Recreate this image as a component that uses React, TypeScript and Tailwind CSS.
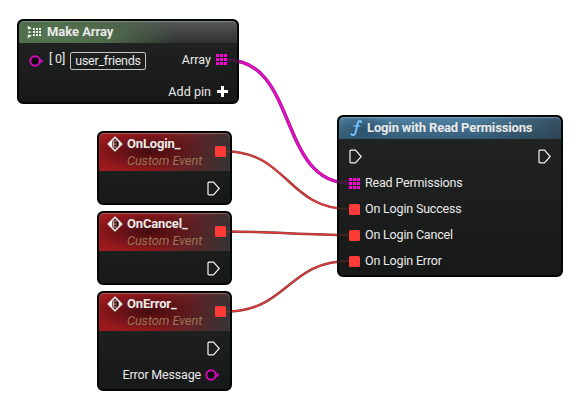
import React from "react";

const wires = [
  { d: "M227 60C298 60 278 183 349 183", color: "#e60bc4", edge: "#7d2470", width: 2.6 },
  { d: "M226 151.500C287 151.500 288 209 349 209", color: "#e03a3a", edge: "#7c3535", width: 1.5 },
  { d: "M226 231.500C268 231.500 307 235 349 235", color: "#e03a3a", edge: "#7c3535", width: 1.5 },
  { d: "M226 311.500C287 311.500 288 261 349 261", color: "#e03a3a", edge: "#7c3535", width: 1.5 },
];

function Wires({ className }: { className: string }) {
  return (
    <svg className={`pointer-events-none absolute inset-0 ${className}`} width="584" height="417" fill="none">
      {wires.map((w) => (
        <g key={w.d}>
          <path d={w.d} stroke={w.edge} strokeWidth={w.width + 0.9} />
          <path d={w.d} stroke={w.color} strokeWidth={w.width} />
        </g>
      ))}
    </svg>
  );
}

function Node({ className, children }: { className: string; children: React.ReactNode }) {
  return (
    <section
      className={`absolute overflow-hidden rounded-[6px] border-2 border-[#050606] bg-linear-to-b from-[#222524] to-[#171919] ${className}`}
    >
      {children}
    </section>
  );
}

function ExecPin() {
  return (
    <svg className="shrink-0" width="13" height="15" viewBox="0 0 13 15" fill="none">
      <path d="M2 1.200H6.500L12.200 7.500L6.500 13.800H2Q1 13.800 1 12.800V2.200Q1 1.200 2 1.200Z" stroke="#f4f4f4" strokeWidth="1.200" />
    </svg>
  );
}

function ArrayPin() {
  return (
    <svg className="shrink-0" width="11" height="11" fill="#fb06d6">
      {[0, 4, 8].map((y) => [0, 4, 8].map((x) => <rect key={`${x}-${y}`} x={x} y={y} width="3" height="3" />))}
    </svg>
  );
}

function StringPin() {
  return (
    <svg className="shrink-0" width="15" height="12" viewBox="0 0 15 12">
      <circle cx="6" cy="6" r="4.700" fill="#0b0b0b" stroke="#d908bb" strokeWidth="1.900" />
      <path d="M11.300 3.200L14.300 6L11.300 8.800Z" fill="#d908bb" />
    </svg>
  );
}

function DelegatePin() {
  return <span className="size-[11px] shrink-0 rounded-[1.500px] bg-[#ff3b38]" />;
}

function EventIcon() {
  return (
    <svg className="shrink-0" width="16" height="16" viewBox="0 0 16 16">
      <path d="M8 1.200L14.800 8L8 14.800L1.200 8Z" fill="#4a1519" stroke="#f1eeee" strokeWidth="1.600" strokeLinejoin="round" />
      <path d="M5.300 3.700V12.300L1 8Z" fill="#f1eeee" />
      <path d="M9.800 5H6.500V11H9.800M6.500 8H9.300" fill="none" stroke="#c9a9aa" strokeWidth="1.100" />
      <path d="M11.800 5L14.800 8L11.800 11Z" fill="#f1eeee" />
    </svg>
  );
}

function EventNode({ title, className, children }: { title: string; className: string; children?: React.ReactNode }) {
  return (
    <Node className={`left-[97px] w-[135px] ${className}`}>
      <header className="flex h-[38px] rounded-t-[5px] bg-[radial-gradient(ellipse_60px_20px_at_50px_18px,#450d10_0%,#490d1188_50%,transparent_100%),linear-gradient(100deg,#a0191d_0%,#8c1a1e_45%,#582629_75%,#343536_100%)] pl-[8px] shadow-[inset_0_1px_1px_#c28181aa]">
        <span className="pt-[3px]"><EventIcon /></span>
        <div className="ml-[4px] pt-[2px]">
          <h2 className="text-[13px] leading-[17px] font-bold tracking-[-0.150px] whitespace-nowrap text-[#ece9e9]">{title}</h2>
          <p className="text-[12.500px] leading-[17px] tracking-[0.020px] whitespace-nowrap text-[#9a7657] italic">Custom Event</p>
        </div>
        <span className="mt-[13px] mr-[4px] ml-auto flex items-start"><DelegatePin /></span>
      </header>
      <div className="flex h-[34px] items-center justify-end pr-[10px]">
        <ExecPin />
      </div>
      {children}
    </Node>
  );
}

function InputRow({ label, pin }: { label: string; pin: React.ReactNode }) {
  return (
    <div className="flex h-[26px] items-center gap-[5px] pl-[10px]">
      {pin}
      <span className="whitespace-nowrap">{label}</span>
    </div>
  );
}

export default function App() {
  return (
    <main className="relative h-[417px] w-[584px] overflow-hidden bg-white font-['Roboto',sans-serif] text-[12.500px] leading-[16px] tracking-[-0.180px] text-[#e9e9e9]">
      <Wires className="" />

      <Node className="top-[19px] left-[17px] h-[85px] w-[222px]">
        <header className="flex h-[22px] items-center rounded-t-[5px] bg-[radial-gradient(ellipse_125px_32px_at_35px_14px,#577553_0%,#4e6a4b_45%,transparent_100%),linear-gradient(#565958,#2e3130)] pl-[8px] shadow-[inset_0_1px_1px_#9aa899aa]">
          <svg width="15" height="14" viewBox="0 0 15 14" fill="#eef2ed">
            <path d="M0.500 0.500L5 3.500L1 4.500ZM0.500 13.500L5 10.500L1 9.500ZM1.500 6.200H3.500V8H1.500Z" />
            {[3, 6, 9].map((y) => [6, 9, 12].map((x) => <rect key={`${x}-${y}`} x={x} y={y} width="2" height="2" />))}
          </svg>
          <h2 className="ml-[5px] text-[13px] font-bold tracking-[-0.050px]">Make Array</h2>
        </header>
        <div className="flex h-[36px] items-center pr-[10px] pl-[10px]">
          <StringPin />
          <span className="ml-[5px] flex w-[17px] -translate-y-[2px] whitespace-nowrap">[ 0]</span>
          <span className="ml-[4px] flex h-[18px] w-[76px] items-center justify-center rounded-[2px] border border-[#c4c4c4] tracking-[-0.250px]">user_friends</span>
          <span className="mr-[5px] mb-[3px] ml-auto tracking-[0.050px]">Array</span>
          <span className="mb-[4px] flex"><ArrayPin /></span>
        </div>
        <div className="flex h-[23px] items-center justify-end gap-[6px] pt-[2px] pr-[9px]">
          <span className="tracking-[0.050px]">Add pin</span>
          <svg width="11" height="11"><path d="M5.500 0V11M0 5.500H11" stroke="#fff" strokeWidth="3" /></svg>
        </div>
      </Node>

      <EventNode title="OnLogin_" className="top-[131px] h-[74px]" />
      <EventNode title="OnCancel_" className="top-[211px] h-[74px]" />
      <EventNode title="OnError_" className="top-[291px] h-[100px]">
        <div className="flex h-[20px] items-center justify-end gap-[4px] pr-[10px]">
          <span>Error Message</span>
          <StringPin />
        </div>
      </EventNode>

      <Node className="top-[115px] left-[337px] h-[162px] w-[226px]">
        <header className="flex h-[22px] items-center rounded-t-[5px] bg-[radial-gradient(ellipse_30px_16px_at_24px_13px,#2a5069_0%,transparent_100%),linear-gradient(90deg,transparent_60%,#27323b99_100%),linear-gradient(#5283a4,#335c77)] pl-[10px] shadow-[inset_0_1px_1px_#83b1d0aa]">
          <svg width="15" height="18" viewBox="0 0 15 18" fill="none" stroke="#72c4fa" strokeLinecap="round">
            <path d="M12.200 3.200C11.500 1 9.300 1.500 8.500 5L6.700 13C6 16 4 17 2.300 15.300" strokeWidth="2" />
            <path d="M4.800 6.800H10.800" strokeWidth="1.300" />
          </svg>
          <h2 className="ml-[3px] text-[13px] font-bold tracking-[-0.150px] whitespace-nowrap">Login with Read Permissions</h2>
        </header>
        <div className="flex h-[31px] items-center justify-between pt-[3px] pr-[10px] pl-[10px]">
          <ExecPin />
          <ExecPin />
        </div>
        <InputRow label="Read Permissions" pin={<ArrayPin />} />
        <InputRow label="On Login Success" pin={<DelegatePin />} />
        <InputRow label="On Login Cancel" pin={<DelegatePin />} />
        <InputRow label="On Login Error" pin={<DelegatePin />} />
      </Node>

      <Wires className="opacity-20 [clip-path:polygon(0_0,239px_0,239px_104px,232px_104px,232px_417px,337px_417px,337px_0,584px_0,584px_417px,0_417px)]" />
    </main>
  );
}
